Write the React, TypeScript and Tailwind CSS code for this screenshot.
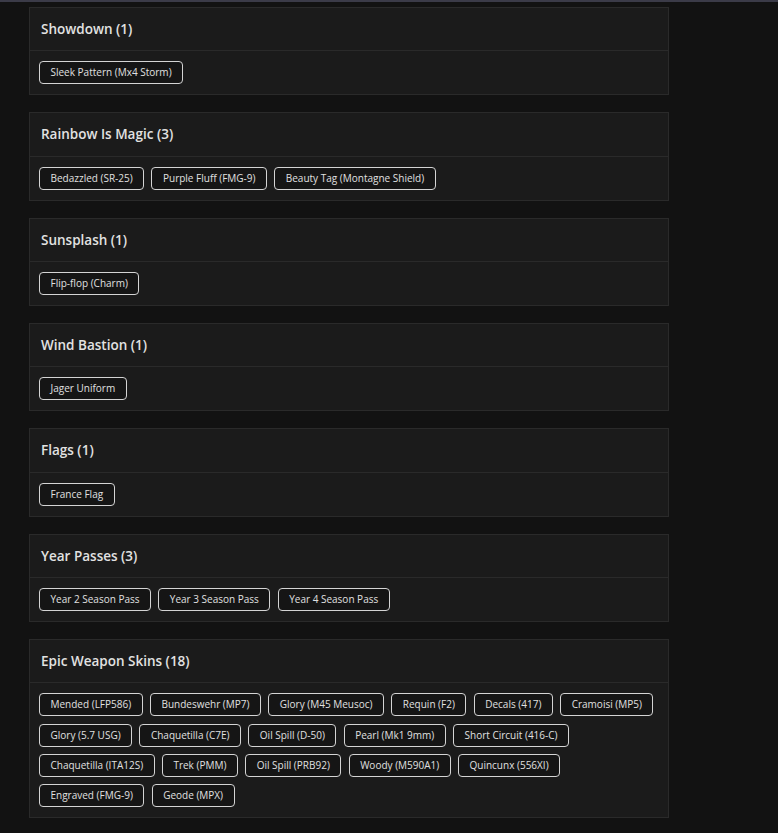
import React from "react";

type Group = { title: string; items: string[] };

const groups: Group[] = [
  { title: "Showdown", items: ["Sleek Pattern (Mx4 Storm)"] },
  {
    title: "Rainbow Is Magic",
    items: ["Bedazzled (SR-25)", "Purple Fluff (FMG-9)", "Beauty Tag (Montagne Shield)"],
  },
  { title: "Sunsplash", items: ["Flip-flop (Charm)"] },
  { title: "Wind Bastion", items: ["Jager Uniform"] },
  { title: "Flags", items: ["France Flag"] },
  {
    title: "Year Passes",
    items: ["Year 2 Season Pass", "Year 3 Season Pass", "Year 4 Season Pass"],
  },
  {
    title: "Epic Weapon Skins",
    items: [
      "Mended (LFP586)",
      "Bundeswehr (MP7)",
      "Glory (M45 Meusoc)",
      "Requin (F2)",
      "Decals (417)",
      "Cramoisi (MP5)",
      "Glory (5.7 USG)",
      "Chaquetilla (C7E)",
      "Oil Spill (D-50)",
      "Pearl (Mk1 9mm)",
      "Short Circuit (416-C)",
      "Chaquetilla (ITA12S)",
      "Trek (PMM)",
      "Oil Spill (PRB92)",
      "Woody (M590A1)",
      "Quincunx (556XI)",
      "Engraved (FMG-9)",
      "Geode (MPX)",
    ],
  },
];

function GroupCard({ group }: { group: Group }) {
  return (
    <section className="border border-[#2a2a2a] bg-[#1b1b1b]">
      <div className="flex h-[43.33px] items-center border-b border-[#2a2a2a] px-[11px]">
        <h3 className="text-[13.5px] font-semibold text-[#e2e2e2]">
          {group.title} ({group.items.length})
        </h3>
      </div>
      <div className="flex flex-wrap gap-[7.3px] px-[9px] py-[10px]">
        {group.items.map((item) => (
          <span
            key={item}
            className="flex h-[23px] items-center rounded-[4px] border border-[#d4d4d4] bg-[#151515] px-[10.5px] text-[10px] text-[#e0e0e0]"
          >
            {item}
          </span>
        ))}
      </div>
    </section>
  );
}

export default function App() {
  return (
    <div
      className="min-h-screen border-t-2 border-[#3b3b48] bg-[#121212]"
      style={{ fontFamily: '"Open Sans", "Liberation Sans", sans-serif' }}
    >
      <div className="flex w-[669px] flex-col gap-[17px] pl-[29px] pt-[5px]">
        {groups.map((g) => (
          <GroupCard key={g.title} group={g} />
        ))}
      </div>
    </div>
  );
}
